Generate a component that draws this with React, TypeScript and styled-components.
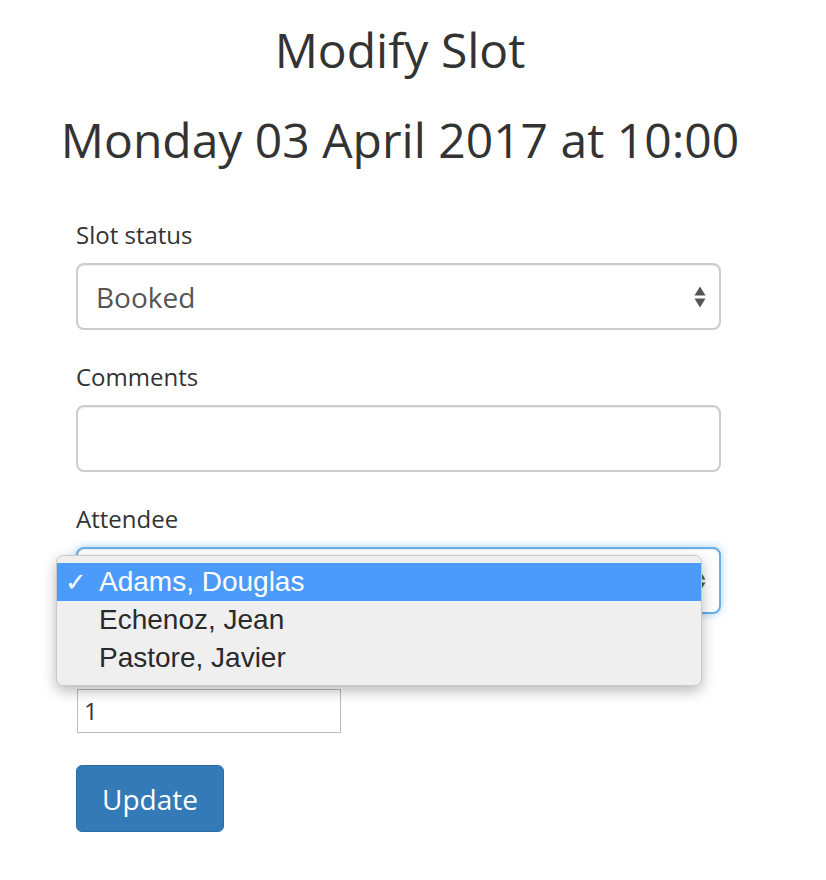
import React from 'react';
import styled, { createGlobalStyle } from 'styled-components';

const GlobalStyle = createGlobalStyle`
  body {
    margin: 0;
    background: #fff;
    font-family: 'Open Sans', 'Liberation Sans', sans-serif;
    color: #333;
  }
`;

const Page = styled.div`
  width: 800px;
  padding-top: 18px;
`;

const Title = styled.h1`
  margin: 0;
  text-align: center;
  font-size: 48px;
  font-weight: 400;
  line-height: 64px;
`;

const Subtitle = styled.h2`
  margin: 24px 0 0;
  text-align: center;
  font-size: 48px;
  font-weight: 400;
  line-height: 68px;
`;

const Form = styled.form`
  width: 645px;
  margin: 45px 0 0 76px;
`;

const Group = styled.div`
  position: relative;
  margin-bottom: 31px;
`;

const Label = styled.label`
  display: block;
  font-size: 24px;
  line-height: 32px;
  margin-bottom: 12px;
  color: #333;
`;

const Field = styled.div<{ $focused?: boolean }>`
  box-sizing: border-box;
  height: 67px;
  display: flex;
  align-items: center;
  padding: 0 13px 0 18px;
  border: 2px solid ${(p) => (p.$focused ? '#66afe9' : '#cccccc')};
  border-radius: 8px;
  background: #fff;
  box-shadow: ${(p) =>
    p.$focused
      ? 'inset 0 1px 1px rgba(0,0,0,.075), 0 0 8px rgba(102,175,233,.6)'
      : 'inset 0 1px 1px rgba(0,0,0,.075)'};
  font-size: 28px;
  color: #555;
`;

const FieldValue = styled.span`
  flex: 1;
`;

const NumberBox = styled.div`
  box-sizing: border-box;
  width: 264px;
  height: 44px;
  margin: 2px 0 0 1px;
  border: 1px solid #bbbbbb;
  padding-left: 6px;
  font-size: 24px;
  line-height: 42px;
  color: #333;
`;

const Button = styled.button`
  box-sizing: border-box;
  width: 148px;
  height: 67px;
  margin-top: 1px;
  border: 1px solid #2e6da4;
  border-radius: 6px;
  background: #337ab7;
  color: #fff;
  font-family: 'Open Sans', sans-serif;
  font-size: 28px;
  padding: 0;
`;

const Menu = styled.ul`
  position: absolute;
  left: -20px;
  top: 52px;
  width: 646px;
  box-sizing: border-box;
  margin: 0;
  padding: 7px 0 8px;
  list-style: none;
  background: #efefef;
  border: 1px solid #c9c9c9;
  border-radius: 7px;
  box-shadow: 0 5px 14px rgba(0, 0, 0, 0.28);
  font-family: 'Liberation Sans', Arial, sans-serif;
  font-size: 28px;
  z-index: 2;
`;

const Option = styled.li<{ $active?: boolean }>`
  display: flex;
  align-items: center;
  height: 38px;
  background: ${(p) => (p.$active ? '#4c9bfa' : 'transparent')};
  color: ${(p) => (p.$active ? '#fff' : '#2a2a2a')};
`;

const Check = styled.span`
  width: 42px;
  padding-left: 8px;
  box-sizing: border-box;
  font-family: 'DejaVu Sans', sans-serif;
  font-size: 26px;
  font-weight: 700;
`;

const Arrows = () => (
  <svg width="12" height="22" viewBox="0 0 12 22">
    <path d="M6 0.5 L11.5 9.5 L0.5 9.5 Z" fill="#555" />
    <path d="M0.5 12.5 L11.5 12.5 L6 21.5 Z" fill="#555" />
  </svg>
);

const attendees = ['Adams, Douglas', 'Echenoz, Jean', 'Pastore, Javier'];

export default function App() {
  return (
    <Page>
      <GlobalStyle />
      <Title>Modify Slot</Title>
      <Subtitle>Monday 03 April 2017 at 10:00</Subtitle>
      <Form>
        <Group>
          <Label>Slot status</Label>
          <Field>
            <FieldValue>Booked</FieldValue>
            <Arrows />
          </Field>
        </Group>
        <Group>
          <Label>Comments</Label>
          <Field />
        </Group>
        <Group>
          <Label>Attendee</Label>
          <Field $focused>
            <FieldValue />
            <Arrows />
          </Field>
          <Menu>
            {attendees.map((name, i) => (
              <Option key={name} $active={i === 0}>
                <Check>{i === 0 ? '✓' : ''}</Check>
                {name}
              </Option>
            ))}
          </Menu>
        </Group>
        <Group>
          <Label aria-hidden>&nbsp;</Label>
          <NumberBox>1</NumberBox>
        </Group>
        <Button type="button">Update</Button>
      </Form>
    </Page>
  );
}
